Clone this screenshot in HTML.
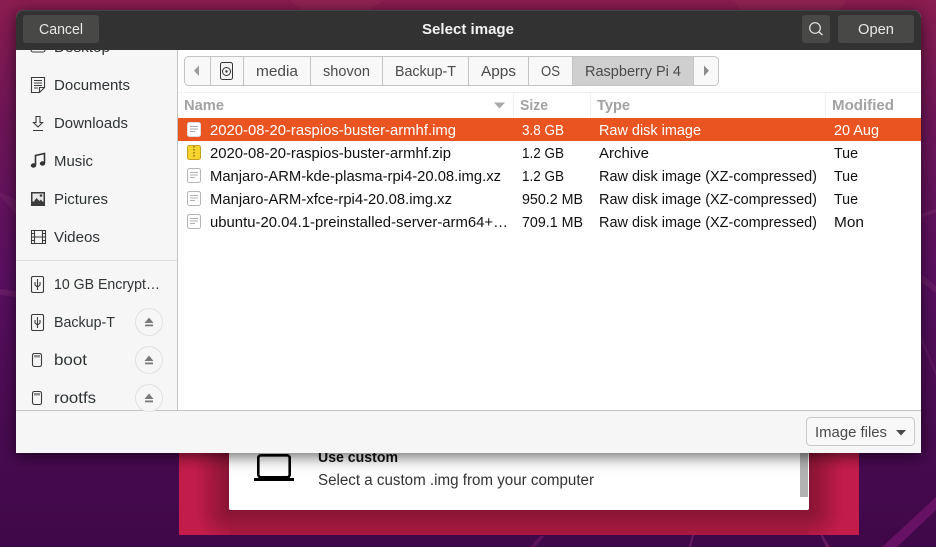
<!DOCTYPE html>
<html><head><meta charset="utf-8">
<style>
html,body{margin:0;padding:0;width:936px;height:547px;overflow:hidden;background:#470a50}
svg{display:block}
text{font-family:"Liberation Sans",sans-serif;font-size:15px;fill:#2e3436}
.b{font-weight:bold}
.h{font-weight:bold;fill:#a2a2a2}
.p{fill:#4a4a4a}
.w{fill:#fff}
.i{fill:none;stroke:#3a3a3a;stroke-width:1.1}
.f{fill:#fff;stroke:#b5b5b5;stroke-width:1}
.l{fill:none;stroke:#b0b0b0;stroke-width:1}
.e{fill:#f6f6f6;stroke:#e0e0e0;stroke-width:1}
</style></head><body>
<svg width="936" height="547" viewBox="0 0 936 547" xmlns="http://www.w3.org/2000/svg">
<defs>
<linearGradient id="bg" x1="0" y1="0" x2="0" y2="1">
<stop offset="0" stop-color="#8b1c50"/><stop offset=".22" stop-color="#6f1558"/><stop offset=".5" stop-color="#590f60"/><stop offset=".8" stop-color="#480a50"/><stop offset="1" stop-color="#3f0848"/>
</linearGradient>
<filter id="ds" filterUnits="userSpaceOnUse" x="-40" y="-40" width="1020" height="560"><feDropShadow dx="0" dy="3" stdDeviation="8" flood-color="#000" flood-opacity=".62"/></filter>
<linearGradient id="sb" gradientUnits="userSpaceOnUse" x1="0" y1="510" x2="0" y2="535">
<stop offset="0" stop-color="#000" stop-opacity=".3"/><stop offset="1" stop-color="#000" stop-opacity=".12"/>
</linearGradient>
<linearGradient id="sl" gradientUnits="userSpaceOnUse" x1="195" y1="0" x2="229" y2="0">
<stop offset="0" stop-color="#000" stop-opacity="0"/><stop offset="1" stop-color="#000" stop-opacity=".3"/>
</linearGradient>
<linearGradient id="sr" gradientUnits="userSpaceOnUse" x1="843" y1="0" x2="809" y2="0">
<stop offset="0" stop-color="#000" stop-opacity="0"/><stop offset="1" stop-color="#000" stop-opacity=".3"/>
</linearGradient>
<radialGradient id="cl" gradientUnits="userSpaceOnUse" cx="229" cy="510" r="34">
<stop offset="0" stop-color="#000" stop-opacity=".3"/><stop offset="1" stop-color="#000" stop-opacity="0"/>
</radialGradient>
<radialGradient id="cr" gradientUnits="userSpaceOnUse" cx="809" cy="510" r="34">
<stop offset="0" stop-color="#000" stop-opacity=".3"/><stop offset="1" stop-color="#000" stop-opacity="0"/>
</radialGradient>
<clipPath id="side"><rect x="16" y="50" width="161" height="360"/></clipPath>
<clipPath id="dlg"><path d="M16 453V18a8 8 0 0 1 8-8H913a8 8 0 0 1 8 8V453Z"/></clipPath>
</defs>

<rect width="936" height="547" fill="url(#bg)"/>
<path d="M290 0H385L365 12H305Z" fill="#9a2c58" opacity=".4"/>
<path d="M734 0H848L838 12H742Z" fill="#9a2c58" opacity=".4"/>
<path d="M0 196L16 214V200L0 192Z" fill="#7d2a70" opacity=".4"/>
<path d="M0 289L16 291V297L0 295Z" fill="#7d2a70" opacity=".45"/>
<path d="M921 214L936 209V212L921 218Z" fill="#7d2a70" opacity=".5"/>
<path d="M921 274L936 286V293L921 282Z" fill="#7d2a70" opacity=".4"/>
<path d="M921 335L936 370V376L921 342Z" fill="#7d2a70" opacity=".3"/>
<path d="M936 497V510L897 547H882Z" fill="#661163"/>
<path d="M689 547L692 535H694L691 547Z" fill="#7d2a70" opacity=".6"/>
<path d="M822 534L830 547H826L820 534Z" fill="#7d2a70" opacity=".6"/>
<path d="M530 547L540 536H545L535 547Z" fill="#6e1565" opacity=".6"/>

<rect x="179" y="400" width="680" height="135" fill="#c21c4a"/>
<rect x="195" y="400" width="34" height="110" fill="url(#sl)"/>
<rect x="809" y="400" width="34" height="110" fill="url(#sr)"/>
<rect x="229" y="510" width="580" height="25" fill="url(#sb)"/>
<rect x="195" y="510" width="34" height="25" fill="url(#cl)"/>
<rect x="809" y="510" width="34" height="25" fill="url(#cr)"/>
<rect x="229" y="400" width="580" height="110" rx="2" fill="#fff"/>
<rect x="800" y="450" width="8" height="47" fill="#b2b2b2"/>
<rect x="258.300" y="455.300" width="31.400" height="22" rx="2.500" fill="none" stroke="#000" stroke-width="2.600"/>
<rect x="254" y="478" width="40" height="3" fill="#000"/>
<text x="318" y="462" class="b" textLength="80" lengthAdjust="spacingAndGlyphs" style="font-size:14.500px;fill:#111">Use custom</text>
<text x="318" y="485" textLength="276" lengthAdjust="spacingAndGlyphs" style="font-size:15.500px;fill:#333">Select a custom .img from your computer</text>

<path d="M16 453V18a8 8 0 0 1 8-8H913a8 8 0 0 1 8 8V453Z" fill="#fff" filter="url(#ds)"/>
<g clip-path="url(#dlg)">
<rect x="16" y="10" width="905" height="40" fill="#333232"/>
<rect x="16" y="10" width="905" height="1" fill="#444"/>
<rect x="16" y="50" width="161" height="360" fill="#f6f6f6"/>
<rect x="177" y="50" width="1" height="360" fill="#c4c4c4"/>
<rect x="16" y="410" width="905" height="43" fill="#f6f6f6"/>
<rect x="16" y="410" width="905" height="1" fill="#c4c4c4"/>
</g>

<rect x="23" y="15" width="76" height="28" rx="3" fill="#484847"/>
<text x="39" y="34" textLength="44" lengthAdjust="spacingAndGlyphs" style="fill:#e8e8e8">Cancel</text>
<text x="422" y="34" textLength="92" lengthAdjust="spacingAndGlyphs" class="b w" style="fill:#f2f2f2">Select image</text>
<rect x="802" y="15" width="28" height="28" rx="3" fill="#484847"/>
<circle cx="815" cy="28" r="5.300" fill="none" stroke="#e8e8e8" stroke-width="1.200"/>
<path d="M819 32L822.500 35" stroke="#e8e8e8" stroke-width="1.300"/>
<rect x="838" y="15" width="76" height="28" rx="3" fill="#484847"/>
<text x="858" y="34" textLength="36" lengthAdjust="spacingAndGlyphs" style="fill:#e8e8e8">Open</text>

<!-- sidebar -->
<g clip-path="url(#side)">
<rect x="31" y="38" width="14" height="14" rx="2" class="i"/>
<text x="54" y="52" textLength="56" lengthAdjust="spacingAndGlyphs">Desktop</text>
</g>
<path class="i" d="M31.500 77.500H44.500V87.500L39.500 92.500H31.500ZM34 80.500H42M34 83H42M34 85.500H42M34 88H38M39.500 92.500V87.500H44.500"/>
<text x="54" y="90" textLength="76" lengthAdjust="spacingAndGlyphs">Documents</text>
<path class="i" d="M36 116.500H40V122.500H42.500L38 127L33.500 122.500H36ZM33 130.500H43"/>
<text x="54" y="128" textLength="74" lengthAdjust="spacingAndGlyphs">Downloads</text>
<path d="M35.500 165V155.500L44.500 153.500V163" fill="none" stroke="#333" stroke-width="1.600"/>
<ellipse cx="33.500" cy="165.500" rx="2.700" ry="2.200" fill="#333"/><ellipse cx="42.500" cy="163.500" rx="2.700" ry="2.200" fill="#333"/>
<text x="54" y="166" textLength="39" lengthAdjust="spacingAndGlyphs">Music</text>
<rect x="31" y="192" width="14" height="14" fill="#3c3c3c"/>
<rect x="32.500" y="193.500" width="11" height="8" fill="#e8e8e8"/>
<path d="M32 204L36.500 198L39.500 201L41 199.500L44 204Z" fill="#3c3c3c"/><circle cx="41" cy="195.500" r="1.300" fill="#3c3c3c"/>
<text x="54" y="204" textLength="54" lengthAdjust="spacingAndGlyphs">Pictures</text>
<path class="i" d="M31.500 230.500H45.500V243.500H31.500ZM34.500 230.500V243.500M42.500 230.500V243.500M34.500 237H42.500M31.500 233.500H34.500M31.500 237H34.500M31.500 240.500H34.500M42.500 233.500H45.500M42.500 237H45.500M42.500 240.500H45.500"/>
<text x="54" y="242" textLength="46" lengthAdjust="spacingAndGlyphs">Videos</text>
<rect x="16" y="260" width="161" height="1" fill="#dcdcdc"/>

<rect x="31.500" y="276.500" width="12" height="16" rx="1.500" class="i"/>
<path class="i" d="M37.500 279V290M35 282V285L37.500 287L40 285V282"/>
<text x="54" y="289" textLength="106" lengthAdjust="spacingAndGlyphs">10 GB Encrypt…</text>
<rect x="31.500" y="314.500" width="12" height="16" rx="1.500" class="i"/>
<path class="i" d="M37.500 317V328M35 320V323L37.500 325L40 323V320"/>
<text x="54" y="327" textLength="61" lengthAdjust="spacingAndGlyphs">Backup-T</text>
<circle cx="149" cy="322" r="13.500" class="e"/>
<path d="M149 317.500L153.500 323H144.500Z" fill="#7a7a7a"/><rect x="145" y="324.500" width="8" height="1.800" fill="#7a7a7a"/>

<path class="i" d="M32.500 355.500C32.500 354 33.500 353.500 34.500 353.500H39.500C41 353.500 41.500 354 41.500 355.500V364.500C41.500 365.500 41 366.500 39.500 366.500H34.500C33.500 366.500 32.500 365.500 32.500 364.500ZM35 355V357.500M37 355V357.500M39 355V357.500"/>
<text x="54" y="365" textLength="33" lengthAdjust="spacingAndGlyphs" style="font-size:16px">boot</text>
<circle cx="149" cy="360" r="13.500" class="e"/>
<path d="M149 355.500L153.500 361H144.500Z" fill="#7a7a7a"/><rect x="145" y="362.500" width="8" height="1.800" fill="#7a7a7a"/>

<path class="i" d="M32.500 393.500C32.500 392 33.500 391.500 34.500 391.500H39.500C41 391.500 41.500 392 41.500 393.500V402.500C41.500 403.500 41 404.500 39.500 404.500H34.500C33.500 404.500 32.500 403.500 32.500 402.500ZM35 393V395.500M37 393V395.500M39 393V395.500"/>
<text x="54" y="403" textLength="42" lengthAdjust="spacingAndGlyphs" style="font-size:16px">rootfs</text>
<circle cx="149" cy="398" r="13.500" class="e"/>
<path d="M149 393.500L153.500 399H144.500Z" fill="#7a7a7a"/><rect x="145" y="400.500" width="8" height="1.800" fill="#7a7a7a"/>

<!-- path bar -->
<rect x="184.500" y="56.500" width="534" height="29" rx="4" fill="#f8f8f8" stroke="#c4c4c4"/>
<rect x="572.500" y="57" width="121.500" height="28" fill="#cfcfcf"/>
<path d="M210.500 57V85M243.500 57V85M310.500 57V85M382.500 57V85M468.500 57V85M528.500 57V85M572.500 57V85M693.500 57V85" stroke="#c4c4c4"/>
<path d="M199 65.500V76L194 70.700Z" fill="#9a9a9a"/>
<path d="M704 65.500V76L709 70.700Z" fill="#8c8c8c"/>
<rect x="220.500" y="62.500" width="12" height="17" rx="2" fill="#f4f4f4" stroke="#333"/>
<circle cx="226.500" cy="71.500" r="4" fill="none" stroke="#333"/><circle cx="226.500" cy="71.500" r="1.200" fill="#333"/>
<text x="256" y="76" textLength="42" lengthAdjust="spacingAndGlyphs" class="p">media</text>
<text x="323" y="76" textLength="47" lengthAdjust="spacingAndGlyphs" class="p">shovon</text>
<text x="395" y="76" textLength="61" lengthAdjust="spacingAndGlyphs" class="p">Backup-T</text>
<text x="481" y="76" textLength="35" lengthAdjust="spacingAndGlyphs" class="p">Apps</text>
<text x="541" y="76" class="p" textLength="19" lengthAdjust="spacingAndGlyphs">OS</text>
<text x="585" y="76" textLength="96" lengthAdjust="spacingAndGlyphs" class="p">Raspberry Pi 4</text>

<!-- column headers -->
<rect x="178" y="92" width="743" height="1" fill="#f0f0f0"/>
<path d="M513.500 93V117M590.500 93V117M825.500 93V117" stroke="#f0f0f0"/>
<text x="184" y="110" class="h" textLength="40" lengthAdjust="spacingAndGlyphs">Name</text>
<path d="M494 102.500H505L499.500 108.500Z" fill="#a8a8a8"/>
<text x="520" y="110" class="h" textLength="28" lengthAdjust="spacingAndGlyphs">Size</text>
<text x="597" y="110" class="h" textLength="33" lengthAdjust="spacingAndGlyphs">Type</text>
<text x="832" y="110" class="h" textLength="62" lengthAdjust="spacingAndGlyphs">Modified</text>

<!-- rows -->
<rect x="178" y="118" width="743" height="23" fill="#e95420"/>
<rect x="187.500" y="122.500" width="13" height="14" rx="2" fill="#fff" stroke="#ddd"/>
<path d="M190 126.500H198M190 129H198M190 131.500H195" stroke="#a8a8a8"/>
<rect x="187.500" y="145.500" width="13" height="14" rx="2" fill="#f6d32d" stroke="#c8a020"/>
<path d="M194 146V158" stroke="#7a6010" stroke-dasharray="1.500 1.500" stroke-width="1.200"/>
<rect x="187.500" y="168.500" width="13" height="14" rx="2" class="f"/>
<path class="l" d="M190 172.500H198M190 175H198M190 177.500H195"/>
<rect x="187.500" y="191.500" width="13" height="14" rx="2" class="f"/>
<path class="l" d="M190 195.500H198M190 198H198M190 200.500H195"/>
<rect x="187.500" y="214.500" width="13" height="14" rx="2" class="f"/>
<path class="l" d="M190 218.500H198M190 221H198M190 223.500H195"/>

<text x="210" y="135" class="w" textLength="246" lengthAdjust="spacingAndGlyphs">2020-08-20-raspios-buster-armhf.img</text>
<text x="522" y="135" class="w" textLength="42" lengthAdjust="spacingAndGlyphs">3.8 GB</text>
<text x="599" y="135" class="w" textLength="102" lengthAdjust="spacingAndGlyphs">Raw disk image</text>
<text x="834" y="135" class="w" textLength="45" lengthAdjust="spacingAndGlyphs">20 Aug</text>

<text x="210" y="158" style="fill:#111" textLength="241" lengthAdjust="spacingAndGlyphs">2020-08-20-raspios-buster-armhf.zip</text>
<text x="522" y="158" style="fill:#111" textLength="42" lengthAdjust="spacingAndGlyphs">1.2 GB</text>
<text x="599" y="158" style="fill:#111" textLength="50" lengthAdjust="spacingAndGlyphs">Archive</text>
<text x="834" y="158" style="fill:#111" textLength="24" lengthAdjust="spacingAndGlyphs">Tue</text>

<text x="210" y="181" style="fill:#111" textLength="291" lengthAdjust="spacingAndGlyphs">Manjaro-ARM-kde-plasma-rpi4-20.08.img.xz</text>
<text x="522" y="181" style="fill:#111" textLength="42" lengthAdjust="spacingAndGlyphs">1.2 GB</text>
<text x="599" y="181" style="fill:#111" textLength="218" lengthAdjust="spacingAndGlyphs">Raw disk image (XZ-compressed)</text>
<text x="834" y="181" style="fill:#111" textLength="24" lengthAdjust="spacingAndGlyphs">Tue</text>

<text x="210" y="204" style="fill:#111" textLength="242" lengthAdjust="spacingAndGlyphs">Manjaro-ARM-xfce-rpi4-20.08.img.xz</text>
<text x="522" y="204" style="fill:#111" textLength="61" lengthAdjust="spacingAndGlyphs">950.2 MB</text>
<text x="599" y="204" style="fill:#111" textLength="218" lengthAdjust="spacingAndGlyphs">Raw disk image (XZ-compressed)</text>
<text x="834" y="204" style="fill:#111" textLength="24" lengthAdjust="spacingAndGlyphs">Tue</text>

<text x="210" y="227" style="fill:#111" textLength="298" lengthAdjust="spacingAndGlyphs">ubuntu-20.04.1-preinstalled-server-arm64+…</text>
<text x="522" y="227" style="fill:#111" textLength="61" lengthAdjust="spacingAndGlyphs">709.1 MB</text>
<text x="599" y="227" style="fill:#111" textLength="218" lengthAdjust="spacingAndGlyphs">Raw disk image (XZ-compressed)</text>
<text x="834" y="227" style="fill:#111" textLength="30" lengthAdjust="spacingAndGlyphs">Mon</text>

<!-- filter combo -->
<rect x="806.500" y="417.500" width="108" height="28" rx="4" fill="#f8f8f8" stroke="#c8c8c8"/>
<text x="815" y="437" class="p" textLength="72" lengthAdjust="spacingAndGlyphs">Image files</text>
<path d="M896 430H906L901 435.500Z" fill="#4a4a4a"/>
</svg>
</body></html>
